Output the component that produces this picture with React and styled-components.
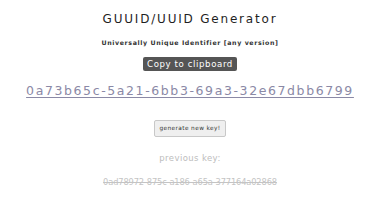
import React from "react"
import styled, {createGlobalStyle} from "styled-components"

const GlobalStyle = createGlobalStyle`
	html, body {
		margin: 0;
		padding: 0;
		background: #ffffff;
	}
	body {
		font-family: "DejaVu Sans", "Noto Sans", sans-serif;
	}
`

const Page = styled.main`
	width: 380px;
	height: 200px;
	display: flex;
	flex-direction: column;
	align-items: center;
	padding-top: 11px;
	box-sizing: border-box;
	overflow: hidden;
`

const Title = styled.h1`
	margin: 0;
	font-size: 12px;
	font-weight: 500;
	letter-spacing: 1.8px;
	color: #1f1f1f;
	line-height: 16px;
`

const Subtitle = styled.p`
	margin: 12px 0 0;
	font-size: 6.3px;
	font-weight: 700;
	letter-spacing: 0.6px;
	color: #333;
	line-height: 8px;
`

const CopyButton = styled.button`
	margin-top: 10px;
	padding: 1px 4px;
	border: none;
	border-radius: 2px;
	background: #555555;
	color: #ffffff;
	font-family: inherit;
	font-size: 8.6px;
	letter-spacing: 0.6px;
	line-height: 12px;
`

const Key = styled.a`
	margin-top: 11px;
	font-size: 12.5px;
	letter-spacing: 1.6px;
	color: #8b89a6;
	text-decoration: underline;
	text-underline-offset: 2px;
	line-height: 18px;
`

const GenerateButton = styled.button`
	margin-top: 20px;
	padding: 4px 4px;
	background: #efefef;
	border: 1px solid #c8c8c8;
	border-radius: 2px;
	font-family: inherit;
	font-size: 5.8px;
	letter-spacing: 0.4px;
	color: #333;
	line-height: 7px;
`

const PrevLabel = styled.p`
	margin: 15px 0 0;
	font-size: 8.5px;
	letter-spacing: 0.4px;
	color: #bdbdbd;
	line-height: 12px;
`

const OldKey = styled.p`
	margin: 13px 0 0;
	font-size: 8.3px;
	letter-spacing: -0.15px;
	color: #c4c4c4;
	text-decoration: line-through;
	line-height: 10px;
`

export default function App() {
	return (
		<>
			<GlobalStyle />
			<Page>
				<Title>GUUID/UUID Generator</Title>
				<Subtitle>Universally Unique Identifier [any version]</Subtitle>
				<CopyButton>Copy to clipboard</CopyButton>
				<Key>0a73b65c-5a21-6bb3-69a3-32e67dbb6799</Key>
				<GenerateButton>generate new key!</GenerateButton>
				<PrevLabel>previous key:</PrevLabel>
				<OldKey>0ad78972-875c-a186-a65a-377164a02868</OldKey>
			</Page>
		</>
	)
}
